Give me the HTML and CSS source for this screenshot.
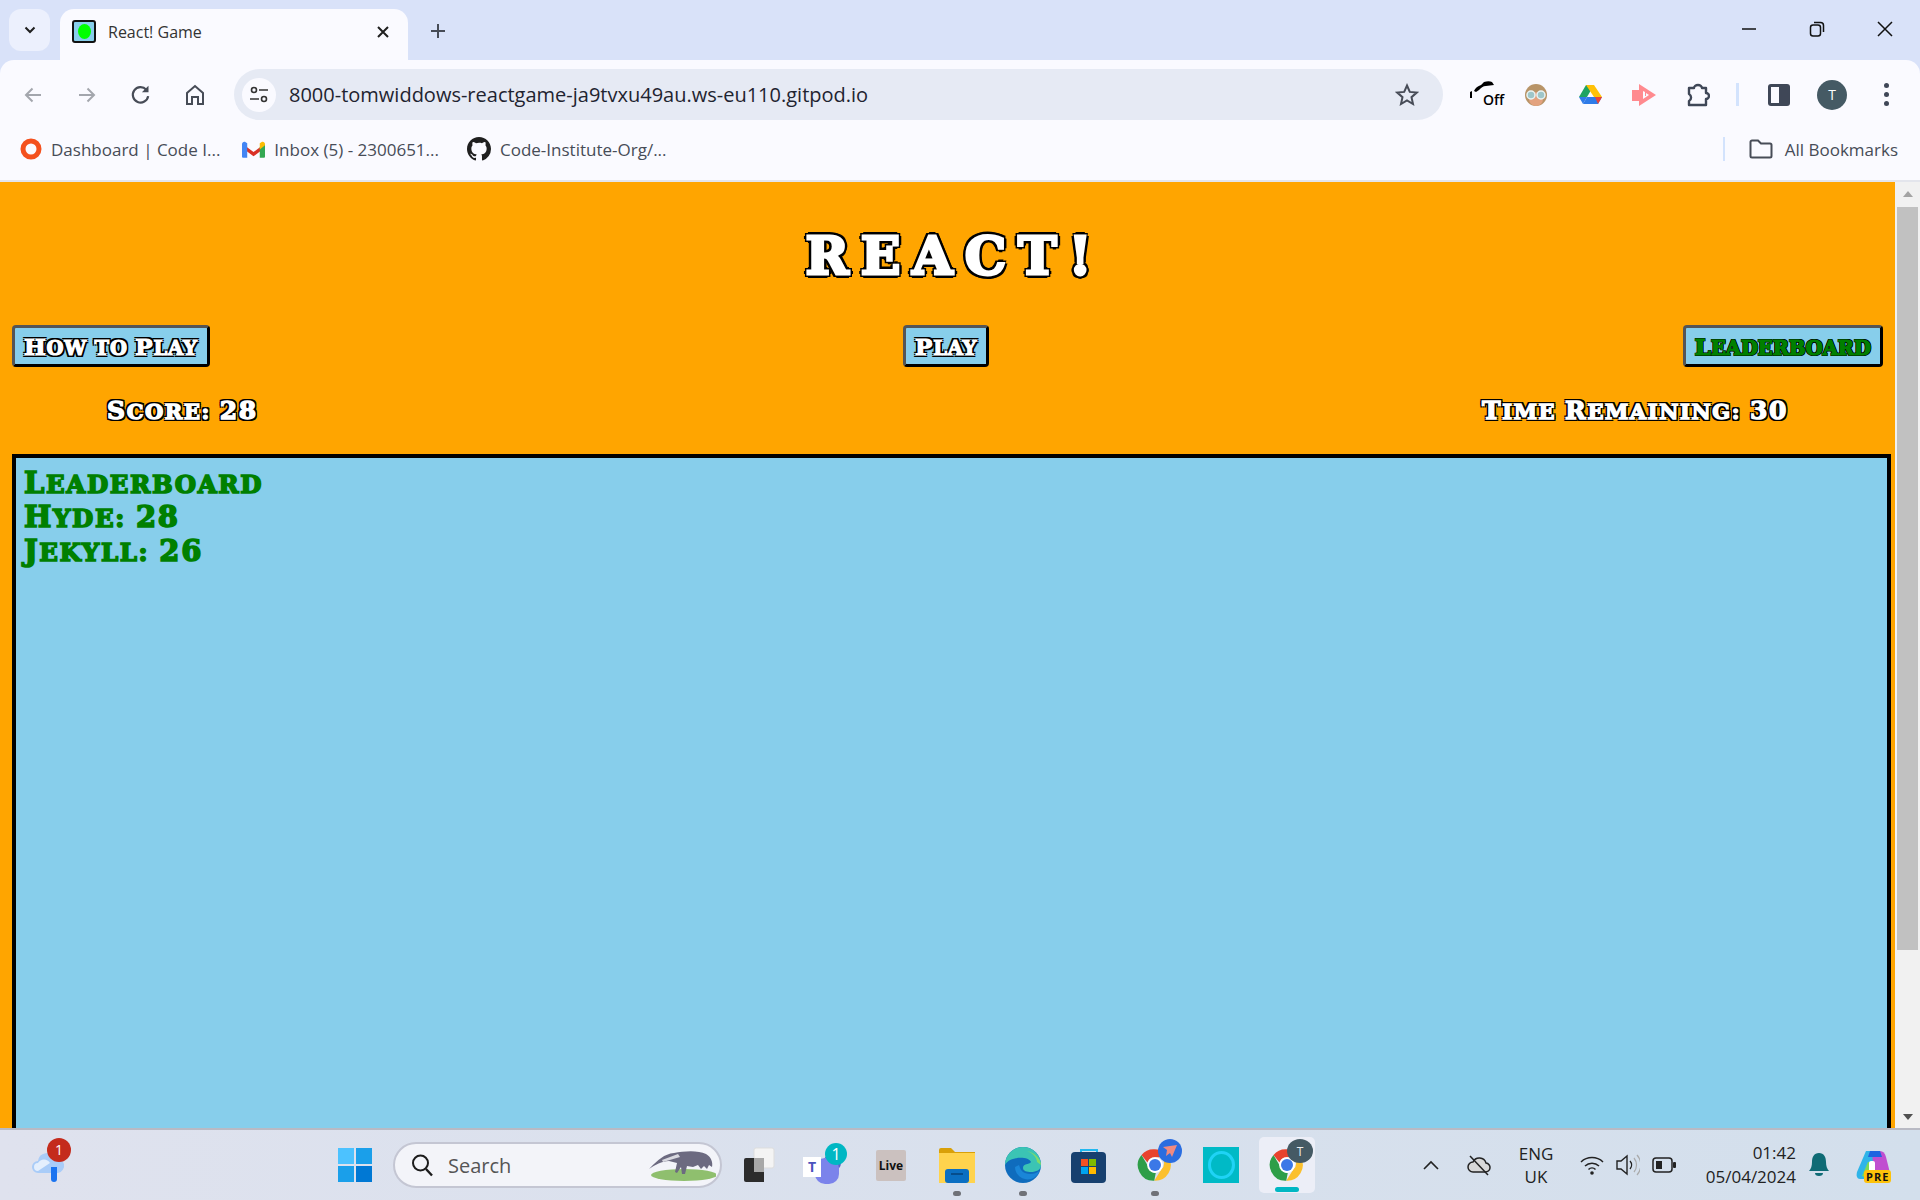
FILE: index.html
```html
<!DOCTYPE html>
<html lang="en">
<head>
    <meta charset="UTF-8">
    <title>React! Game</title>
    <link rel="stylesheet" href="styles.css">
</head>
<body>
    <svg class="defs" width="0" height="0">
        <symbol id="chrome-logo" viewBox="0 0 48 48">
            <path d="M24 3a21 21 0 0 1 18.2 10.5H24a10.500 10.500 0 0 0-10 7.300L6 10.500A21 21 0 0 1 24 3z" fill="#e8432e"/>
            <path d="M42.200 13.500A21 21 0 0 1 23 45l9.500-15.500a10.500 10.500 0 0 0 0-16z" fill="#fbc02d"/>
            <path d="M6 10.500l9 15.500a10.500 10.500 0 0 0 10 8.500l-2 10.500A21 21 0 0 1 6 10.500z" fill="#2e9e48"/>
            <circle cx="24" cy="24" r="10.500" fill="#fff"/>
            <circle cx="24" cy="24" r="8" fill="#3b78e7"/>
        </symbol>
    </svg>

    <div class="tab-strip">
        <div class="tab-list">
            <svg width="14" height="14" viewBox="0 0 14 14"><path d="M2.500 4.500L7 9l4.500-4.500" fill="none" stroke="#1f1f1f" stroke-width="2"/></svg>
        </div>
        <div class="tab">
            <span class="favicon"><span class="favicon-dot"></span></span>
            <span class="tab-title">React! Game</span>
            <svg class="tab-close" width="14" height="14" viewBox="0 0 14 14"><path d="M2 2l10 10M12 2L2 12" stroke="#1f1f1f" stroke-width="2"/></svg>
        </div>
        <svg class="new-tab" width="18" height="18" viewBox="0 0 18 18"><path d="M9 2v14M2 9h14" stroke="#474c57" stroke-width="2"/></svg>
        <div class="window-controls">
            <svg width="16" height="16" viewBox="0 0 16 16"><path d="M1 8h14" stroke="#111" stroke-width="1.500"/></svg>
            <svg width="16" height="16" viewBox="0 0 16 16"><rect x="1.500" y="4" width="10" height="11" rx="2.500" fill="none" stroke="#111" stroke-width="1.500"/><path d="M5 1.500h6.500a3 3 0 0 1 3 3V11" fill="none" stroke="#111" stroke-width="1.500"/></svg>
            <svg width="16" height="16" viewBox="0 0 16 16"><path d="M1 1l14 14M15 1L1 15" stroke="#111" stroke-width="1.500"/></svg>
        </div>
    </div>

    <div class="toolbar">
        <span class="tool-btn"><svg width="20" height="20" viewBox="0 0 20 20"><path d="M18 10H3M9.500 3.500L3 10l6.500 6.500" fill="none" stroke="#a3a6ad" stroke-width="2"/></svg></span>
        <span class="tool-btn"><svg width="20" height="20" viewBox="0 0 20 20"><path d="M2 10h15M10.500 3.500L17 10l-6.500 6.500" fill="none" stroke="#a3a6ad" stroke-width="2"/></svg></span>
        <span class="tool-btn"><svg width="22" height="22" viewBox="0 0 20 20"><path d="M16.500 11a7 7 0 1 1-1.700-5.800" fill="none" stroke="#474c57" stroke-width="2"/><path d="M16.800 1.500v6h-6z" fill="#474c57"/></svg></span>
        <span class="tool-btn"><svg width="20" height="22" viewBox="0 0 20 22"><path d="M2 20V9l8-7 8 7v11h-5v-7H7v7z" fill="none" stroke="#474c57" stroke-width="2"/></svg></span>
        <div class="omnibox">
            <span class="site-info">
                <svg width="20" height="20" viewBox="0 0 20 20"><circle cx="5" cy="5" r="2.500" fill="none" stroke="#333" stroke-width="1.600"/><path d="M10 5h9M1 14h9" stroke="#333" stroke-width="1.600"/><circle cx="15" cy="14" r="2.500" fill="none" stroke="#333" stroke-width="1.600"/></svg>
            </span>
            <span class="url">8000-tomwiddows-reactgame-ja9tvxu49au.ws-eu110.gitpod.io</span>
            <svg class="star" width="24" height="24" viewBox="0 0 24 24"><path d="M12 2.500l2.800 6.400 6.900.7-5.200 4.600 1.500 6.800-6-3.500-6 3.500 1.500-6.800-5.200-4.600 6.900-.7z" fill="none" stroke="#474c57" stroke-width="2"/></svg>
        </div>
        <span class="ext-btn ext-off">
            <svg width="26" height="20" viewBox="0 0 26 20"><path d="M5 11c1-3 4-5 7-6l3-3c3-1 6-1 8 0l2 3-8 1c-3 0-5 2-7 4l-3 2zM1 12l2-1v7H1z" fill="#000"/></svg>
            <span class="off-badge">Off</span>
        </span>
        <span class="ext-btn">
            <svg width="24" height="24" viewBox="0 0 24 24"><circle cx="12" cy="12" r="11" fill="#b89468"/><ellipse cx="12" cy="16" rx="7" ry="7" fill="#e3a27f"/><circle cx="7" cy="12" r="4" fill="#9ec6c9" stroke="#e8f4f4" stroke-width="1.500"/><circle cx="17" cy="12" r="4" fill="#9ec6c9" stroke="#e8f4f4" stroke-width="1.500"/></svg>
        </span>
        <span class="ext-btn">
            <svg width="24" height="22" viewBox="0 0 24 22"><path d="M8 1h8L9 13H1z" fill="#1ea362"/><path d="M8 1h8l8 12h-8z" fill="#ffc107"/><path d="M24 13l-4 7H5l4-7z" fill="#2f7be8"/><path d="M20 20l4-7h-7z" fill="#ea4335"/><path d="M9 13l-4 7-4-7z" fill="#2f7be8"/></svg>
        </span>
        <span class="ext-btn">
            <svg width="26" height="24" viewBox="0 0 26 24"><path d="M8 1l17 11L8 23v-5H1V7h7zM12 8v8l6-4-3-2v3l-1 0V9z" fill="#ff8a8f" fill-rule="evenodd"/></svg>
        </span>
        <span class="ext-btn">
            <svg width="24" height="24" viewBox="0 0 24 24"><path d="M3 5h5a4 3 0 0 1 8 0h4v5a3 3 0 0 1 0 6v6H3v-4a4 4 0 0 0 0-7z" fill="none" stroke="#3f4757" stroke-width="2.400" stroke-linejoin="round"/></svg>
        </span>
        <span class="tool-divider"></span>
        <span class="panel-icon"><span class="panel-icon-fill"></span></span>
        <span class="avatar">T</span>
        <span class="dots"><i></i><i></i><i></i></span>
    </div>

    <div class="bookmarks">
        <span class="bookmark">
            <svg width="22" height="22" viewBox="0 0 22 22"><circle cx="11" cy="11" r="8" fill="none" stroke="#f4511e" stroke-width="5"/></svg>
            Dashboard | Code I...
        </span>
        <span class="bookmark bookmark-inbox">
            <svg width="23" height="17" viewBox="0 0 22 16"><path d="M1 3l10 7.500L21 3v4l-10 7.500L1 7z" fill="#d93025"/><path d="M0 3c0-2 2-3 3.500-2L5 2v14H1a1 1 0 0 1-1-1z" fill="#4285f4"/><path d="M17 6l5-3v12a1 1 0 0 1-1 1h-4z" fill="#34a853"/><path d="M17 2l1.500-1C20 0 22 1 22 3v1l-5 4z" fill="#fbbc04"/></svg>
            Inbox (5) - 2300651...
        </span>
        <span class="bookmark">
            <svg width="24" height="24" viewBox="0 0 16 16"><path d="M8 0C3.580 0 0 3.580 0 8c0 3.540 2.290 6.530 5.470 7.590.4.070.55-.17.55-.38v-1.340c-2.230.48-2.700-1.070-2.700-1.070-.36-.93-.89-1.170-.89-1.170-.73-.5.050-.49.050-.49.800.060 1.220.820 1.220.820.720 1.220 1.870.870 2.330.660.070-.520.280-.870.510-1.070-1.780-.200-3.640-.890-3.640-3.950 0-.870.310-1.590.820-2.150-.080-.200-.360-1.020.080-2.120 0 0 .670-.210 2.200.820A7.660 7.660 0 0 1 8 3.870c.680 0 1.360.090 2 .270 1.530-1.040 2.200-.820 2.200-.820.440 1.100.160 1.920.080 2.120.510.560.820 1.270.820 2.150 0 3.070-1.870 3.750-3.650 3.950.290.250.540.730.540 1.480v2.190c0 .210.150.460.550.380A8.010 8.010 0 0 0 16 8c0-4.420-3.580-8-8-8z" fill="#1f1f1f"/></svg>
            Code-Institute-Org/...
        </span>
        <span class="bookmark-divider"></span>
        <span class="bookmark all-bookmarks">
            <svg width="24" height="20" viewBox="0 0 24 20"><path d="M1.500 3a1.500 1.500 0 0 1 1.500-1.500h6l3 3h9A1.500 1.500 0 0 1 22.500 6v11A1.500 1.500 0 0 1 21 18.500H3A1.500 1.500 0 0 1 1.500 17z" fill="none" stroke="#474c57" stroke-width="2"/></svg>
            All Bookmarks
        </span>
    </div>

    <div class="viewport">
        <main class="game">
            <h1 class="game-title">React!</h1>
            <div class="game-buttons">
                <button class="game-btn" type="button"><span class="cap">H</span>ow to <span class="cap">P</span>lay</button>
                <button class="game-btn" type="button"><span class="cap">P</span>lay</button>
                <button class="game-btn game-btn-active" type="button"><span class="cap">L</span>eaderboard</button>
            </div>
            <div class="game-stats">
                <span class="stat"><span class="cap">S</span>core: <span class="cap">28</span></span>
                <span class="stat"><span class="cap">T</span>ime <span class="cap">R</span>emaining: <span class="cap">30</span></span>
            </div>
            <section class="game-area">
                <p><span class="cap">L</span>eaderboard</p>
                <p><span class="cap">H</span>yde: <span class="cap">28</span></p>
                <p><span class="cap">J</span>ekyll: <span class="cap">26</span></p>
            </section>
        </main>
        <div class="scrollbar">
            <span class="scroll-arrow-up"></span>
            <span class="scroll-thumb"></span>
            <span class="scroll-arrow-down"></span>
        </div>
    </div>

    <footer class="taskbar">
        <span class="weather">
            <svg width="36" height="40" viewBox="0 0 36 40"><path d="M8 28a6 6 0 0 1 0-12 9 9 0 0 1 17-3 7.500 7.500 0 0 1 3 15z" fill="#a9ccf8"/><path d="M8 26a4 4 0 0 1 0-8 7 7 0 0 1 12 0z" fill="#e4effd"/><path d="M21 22h6v12a3 3 0 0 1-6 0z" fill="#1a73f0"/></svg>
            <span class="weather-badge">1</span>
        </span>
        <div class="task-center">
            <span class="task-slot">
                <svg width="36" height="36" viewBox="0 0 36 36"><path d="M1 1h16v16H1z" fill="#4cc2ff"/><path d="M19 1h16v16H19z" fill="#1a9fea"/><path d="M1 19h16v16H1z" fill="#1a9fea"/><path d="M19 19h16v16H19z" fill="#0078d4"/></svg>
            </span>
            <div class="search">
                <svg width="24" height="24" viewBox="0 0 24 24"><circle cx="10.500" cy="10" r="7.500" fill="none" stroke="#1c1c1c" stroke-width="2"/><path d="M16 16l6 6.500" stroke="#1c1c1c" stroke-width="2.400"/></svg>
                <span class="search-label">Search</span>
                <svg class="anteater" width="68" height="34" viewBox="0 0 68 34"><ellipse cx="36" cy="27" rx="33" ry="6" fill="#8fbf6e"/><path d="M2 20c8-8 14-14 24-15 10-2 24-3 32 1 5 3 7 8 6 13l-3-2-2 4-3-3-3 3-3-4-5 2-6-1-2 8h-3l-1-7-4 6-2-1 2-9-8-2c-7 0-14 4-20 8z" fill="#6c6a80"/><path d="M14 12l16-6 2 3-17 5z" fill="#d9d9e0"/></svg>
            </div>
            <span class="task-slot first-app">
                <svg width="34" height="36" viewBox="0 0 34 36"><rect x="12" y="1" width="20" height="20" rx="2" fill="#f4f4f4" stroke="#ddd"/><path d="M2 13a2 2 0 0 1 2-2h18v24H4a2 2 0 0 1-2-2z" fill="#2c2c2c"/><rect x="12" y="11" width="10" height="14" fill="#a8a8a8"/></svg>
            </span>
            <span class="task-slot">
                <svg width="44" height="44" viewBox="0 0 44 44"><circle cx="29" cy="20" r="9" fill="#5b5fc7"/><rect x="12" y="15" width="24" height="26" rx="10" fill="#7b83eb"/><rect x="0" y="14" width="18" height="20" fill="#fff"/><text x="9" y="29" class="teams-t">T</text><circle cx="33" cy="11" r="11" fill="#00b7c3"/><text x="33" y="17" class="teams-n">1</text></svg>
            </span>
            <span class="task-slot"><span class="live-icon">Live</span></span>
            <span class="task-slot dot-under">
                <svg width="36" height="36" viewBox="0 0 36 36"><path d="M0 3a2 2 0 0 1 2-2h10l4 4h20v6H0z" fill="#d9a008"/><path d="M0 6h36v30H0z" fill="#ffd34d"/><rect x="6" y="22" width="24" height="14" rx="3" fill="#0b6fc2"/><path d="M12 27h12" stroke="#064d8c" stroke-width="2"/></svg>
            </span>
            <span class="task-slot dot-under">
                <svg width="36" height="36" viewBox="0 0 36 36"><circle cx="18" cy="18" r="18" fill="#0f6cbd"/><path d="M0 18A18 18 0 0 1 36 18c0 5-5 7-10 7-4 0-8-1-8-4 0-5 6-3 8-6C24 9 4 9 0 18z" fill="#3bc4b4"/><path d="M36 18c0-5-5-12-14-14 6 2 10 7 10 11z" fill="#7fdc6a"/><path d="M10 20c0 8 8 14 16 12 6-2 8-6 8-8-3 3-9 4-14 2-3-1-5-4-6-8z" fill="#1a86d8"/></svg>
            </span>
            <span class="task-slot">
                <svg width="36" height="36" viewBox="0 0 36 36"><path d="M10 7V3h16v4" fill="none" stroke="#22b8f0" stroke-width="2"/><rect x="0" y="5" width="35" height="31" rx="4" fill="#17406f"/><rect x="10" y="12" width="7" height="7" fill="#f25022"/><rect x="18" y="12" width="7" height="7" fill="#7fba00"/><rect x="10" y="20" width="7" height="7" fill="#00a4ef"/><rect x="18" y="20" width="7" height="7" fill="#ffb900"/></svg>
            </span>
            <span class="task-slot dot-under badged">
                <svg width="36" height="36"><use href="#chrome-logo"/></svg>
                <span class="chrome-badge chrome-badge-blue">
                    <svg width="16" height="16" viewBox="0 0 16 16"><path d="M15 2L10 14 8 10l-4 3 1-6-4-3z" fill="#f08a80"/></svg>
                </span>
            </span>
            <span class="task-slot">
                <span class="alexa-icon"><span class="alexa-ring"></span></span>
            </span>
            <span class="task-slot task-active badged">
                <svg width="36" height="36"><use href="#chrome-logo"/></svg>
                <span class="chrome-badge">T</span>
                <span class="active-bar"></span>
            </span>
        </div>
        <div class="tray">
            <svg class="tray-chevron" width="18" height="18" viewBox="0 0 18 18"><path d="M2 13l7-7 7 7" fill="none" stroke="#222" stroke-width="1.600"/></svg>
            <svg class="tray-cloud" width="24" height="22" viewBox="0 0 24 22"><path d="M6 18a5 5 0 0 1 0-10 7 7 0 0 1 13 1 4.500 4.500 0 0 1-1 9z" fill="#d8d8d8" stroke="#222" stroke-width="1.500"/><path d="M3 2l18 19" stroke="#222" stroke-width="1.500"/></svg>
            <span class="tray-lang">ENG<br>UK</span>
            <svg class="tray-wifi" width="24" height="20" viewBox="0 0 24 20"><path d="M1 7a16 16 0 0 1 22 0M5 11a10 10 0 0 1 14 0M8.500 14.500a5 5 0 0 1 7 0" fill="none" stroke="#222" stroke-width="1.500"/><circle cx="12" cy="18" r="1.800" fill="#222"/></svg>
            <svg class="tray-sound" width="24" height="22" viewBox="0 0 24 22"><path d="M1 7h4l6-5v18l-6-5H1z" fill="none" stroke="#222" stroke-width="1.400"/><path d="M14 7a6 6 0 0 1 0 8" fill="none" stroke="#222" stroke-width="1.400"/><path d="M18 4a11 11 0 0 1 0 14M21 1a15 15 0 0 1 0 20" fill="none" stroke="#aaa" stroke-width="1.200"/></svg>
            <svg class="tray-battery" width="24" height="16" viewBox="0 0 24 16"><rect x="1" y="1" width="19" height="14" rx="3" fill="none" stroke="#222" stroke-width="1.500"/><rect x="4" y="4" width="6" height="8" fill="#222"/><rect x="21" y="5" width="3" height="6" rx="1" fill="#222"/></svg>
            <span class="tray-clock">01:42<br>05/04/2024</span>
            <svg class="tray-bell" width="20" height="24" viewBox="0 0 20 24"><path d="M10 0c5 0 7 4 7 9 0 4 1 7 3 9H0c2-2 3-5 3-9 0-5 2-9 7-9z" fill="#0f6b75"/><path d="M6 20h8a4 3 0 0 1-8 0z" fill="#0f6b75"/></svg>
            <span class="copilot">
                <svg width="34" height="30" viewBox="0 0 34 30"><path d="M10 1h14l-8 28H4C1 29 0 26 1 22z" fill="#2fb4e8"/><path d="M6 26l6-14h6l-4 17z" fill="#7ed957"/><path d="M16 1h8c3 0 5 2 6 6l3 12c1 4-1 7-4 7H18z" fill="#c04fd0"/><path d="M14 1h10l2 6H12z" fill="#1e64e0"/><rect x="13" y="11" width="6" height="12" rx="2" fill="#fff"/></svg>
                <span class="pre-badge">PRE</span>
            </span>
        </div>
    </footer>
</body>
</html>
```

FILE: styles.css
```css
* {
    box-sizing: border-box;
}
html, body {
    margin: 0;
    height: 1200px;
    overflow: hidden;
}
body {
    display: flex;
    flex-direction: column;
    font-family: "Open Sans", "Noto Sans", sans-serif;
    background-color: #d9e2f9;
}
svg {
    display: block;
    flex-shrink: 0;
}
.defs {
    position: absolute;
}

/* browser tabs */
.tab-strip {
    height: 60px;
    display: flex;
    align-items: flex-start;
    padding-left: 9px;
    background-color: #d9e2f9;
}
.tab-list {
    width: 41px;
    height: 42px;
    margin-top: 9px;
    display: flex;
    align-items: center;
    justify-content: center;
    background-color: #ecf0fd;
    border-radius: 12px;
}
.tab {
    width: 348px;
    height: 51px;
    margin: 9px 0 0 10px;
    padding: 0 18px 6px 12px;
    display: flex;
    align-items: center;
    background-color: #fafaff;
    border-radius: 14px 14px 0 0;
}
.favicon {
    width: 24px;
    height: 23px;
    display: flex;
    align-items: center;
    justify-content: center;
    background-color: #87ceeb;
    border: 2px solid #111;
    border-radius: 3px;
}
.favicon-dot {
    width: 13px;
    height: 15px;
    background-color: #00ff00;
    border-radius: 50%;
}
.tab-title {
    margin-left: 12px;
    font-size: 16px;
    color: #333;
}
.tab-close {
    margin-left: auto;
}
.new-tab {
    margin: 22px 0 0 21px;
}
.window-controls {
    margin-left: auto;
    padding: 21px 27px 0 0;
    display: flex;
    gap: 52px;
}

/* toolbar */
.toolbar {
    height: 60px;
    display: flex;
    align-items: center;
    padding: 9px 0 0 6px;
    background-color: #fafaff;
    border-radius: 14px 14px 0 0;
}
.tool-btn {
    width: 54px;
    display: flex;
    justify-content: center;
}
.omnibox {
    width: 1209px;
    height: 51px;
    margin-left: 12px;
    padding: 0 24px 0 8px;
    display: flex;
    align-items: center;
    background-color: #e6eaf4;
    border-radius: 26px;
}
.site-info {
    width: 34px;
    height: 34px;
    display: flex;
    align-items: center;
    justify-content: center;
    background-color: #fafaff;
    border-radius: 50%;
}
.url {
    margin-left: 13px;
    font-size: 20px;
    color: #1f2430;
}
.star {
    margin-left: auto;
}
.ext-btn {
    width: 54px;
    display: flex;
    justify-content: center;
}
.ext-off {
    position: relative;
    margin-left: 12px;
    height: 30px;
}
.off-badge {
    position: absolute;
    top: 10px;
    left: 27px;
    padding: 0 1px;
    font-size: 14px;
    font-weight: 600;
    line-height: 20px;
    color: #000;
    background-color: #fafaff;
    border-radius: 3px;
}
.tool-divider {
    width: 3px;
    height: 23px;
    margin-left: 11px;
    background-color: #d3e3fd;
}
.panel-icon {
    width: 22px;
    height: 22px;
    margin-left: 29px;
    padding: 3px 11px 3px 3px;
    background-color: #3f4757;
    border-radius: 3px;
}
.panel-icon-fill {
    display: block;
    width: 100%;
    height: 100%;
    background-color: #fafaff;
}
.avatar {
    width: 30px;
    height: 30px;
    margin-left: 27px;
    display: flex;
    align-items: center;
    justify-content: center;
    font-size: 14px;
    color: #fff;
    background-color: #455a64;
    border-radius: 50%;
}
.dots {
    margin-left: 37px;
    display: flex;
    flex-direction: column;
    gap: 4px;
}
.dots i {
    width: 5px;
    height: 5px;
    background-color: #3f4757;
    border-radius: 50%;
}

/* bookmarks */
.bookmarks {
    height: 62px;
    padding: 0 22px 2px 20px;
    display: flex;
    align-items: center;
    font-size: 17px;
    color: #474c57;
    background-color: #fafaff;
    border-bottom: 2px solid #e3e5ec;
}
.bookmark {
    display: flex;
    align-items: center;
    gap: 9px;
    margin-right: 22px;
    white-space: nowrap;
}
.bookmark-inbox {
    margin-right: 28px;
}
.bookmark-divider {
    width: 2px;
    height: 24px;
    margin-left: auto;
    margin-right: 24px;
    background-color: #d3e3fd;
}
.all-bookmarks {
    gap: 12px;
    margin-right: 0;
}

/* game page */
.viewport {
    height: 946px;
    display: flex;
    overflow: hidden;
}
.game {
    width: 1895px;
    height: 946px;
    background-color: orange;
    font-family: "DejaVu Serif", "Liberation Serif", serif;
    font-weight: 700;
    overflow: hidden;
}
.game-title {
    margin: 0;
    height: 143px;
    padding: 39px 0 0 14px;
    text-align: center;
    font-size: 52px;
    line-height: 70px;
    text-transform: uppercase;
    letter-spacing: 12px;
    color: #fff;
    -webkit-text-stroke: 3px #fff;
    text-shadow: 4px 0 #000, -4px 0 #000, 0 4px #000, 0 -4px #000, 3px 3px #000, -3px 3px #000, 3px -3px #000, -3px -3px #000;
}
.game-buttons {
    height: 42px;
    padding: 0 12px;
    display: flex;
    justify-content: space-between;
}
.game-btn {
    height: 42px;
    padding: 0 9px;
    font-family: inherit;
    font-weight: inherit;
    font-size: 19.5px;
    text-transform: uppercase;
    letter-spacing: .8px;
    color: #fff;
    -webkit-text-stroke: 1.2px #fff;
    text-shadow: 2px 0 #000, -2px 0 #000, 0 2px #000, 0 -2px #000, 2px 2px #000, -2px 2px #000, 2px -2px #000, -2px -2px #000;
    background-color: #87ceeb;
    border: 3px solid;
    border-color: #555 #000 #000 #555;
    border-radius: 4px;
}
.game-btn .cap {
    font-size: 23px;
}
.game-btn-active {
    letter-spacing: 0;
    color: green;
    -webkit-text-stroke-color: green;
    text-shadow: 1px 0 #000, -1px 0 #000, 0 1px #000, 0 -1px #000, 1px 1px #000, -1px 1px #000, 1px -1px #000, -1px -1px #000;
}
.game-stats {
    height: 87px;
    padding: 0 107px 0;
    display: flex;
    align-items: center;
    justify-content: space-between;
    font-size: 21px;
    text-transform: uppercase;
    letter-spacing: 1.6px;
    color: #fff;
    -webkit-text-stroke: 1.4px #fff;
    text-shadow: 2px 0 #000, -2px 0 #000, 0 2px #000, 0 -2px #000, 2px 2px #000, -2px 2px #000, 2px -2px #000, -2px -2px #000;
}
.game-stats .cap {
    font-size: 25px;
}
.game-area {
    height: 1000px;
    margin: 0 4px 0 12px;
    padding: 10px 8px;
    font-size: 24.5px;
    line-height: 34px;
    text-transform: uppercase;
    letter-spacing: 1.6px;
    color: green;
    -webkit-text-stroke: 1.6px green;
    background-color: #87ceeb;
    border: 4px solid #000;
}
.game-area .cap {
    font-size: 29px;
    line-height: 0;
}
.game-area p {
    margin: 0;
}

/* scrollbar */
.scrollbar {
    width: 25px;
    padding: 0 2px 0 2px;
    display: flex;
    flex-direction: column;
    align-items: center;
    background-color: #f1f1f1;
}
.scroll-arrow-up {
    margin: 9px 0 10px;
    border: 5px solid transparent;
    border-top: 0;
    border-bottom: 6px solid #a3a3a3;
    border-left-width: 5px;
}
.scroll-thumb {
    width: 21px;
    height: 743px;
    background-color: #c1c1c1;
}
.scroll-arrow-down {
    margin-top: auto;
    margin-bottom: 8px;
    border: 5px solid transparent;
    border-bottom: 0;
    border-top: 6px solid #505050;
}

/* windows taskbar */
.taskbar {
    position: relative;
    height: 72px;
    display: flex;
    align-items: center;
    background: linear-gradient(90deg, #dfe2ee, #d3dfec);
    border-top: 2px solid #b9bac4;
}
.weather {
    position: relative;
    width: 36px;
    margin-left: 30px;
}
.weather-badge {
    position: absolute;
    top: -7px;
    left: 17px;
    width: 24px;
    height: 24px;
    font-size: 14px;
    line-height: 24px;
    text-align: center;
    color: #fff;
    background-color: #c42b1c;
    border-radius: 50%;
}
.task-center {
    margin-left: 256px;
    display: flex;
    align-items: center;
}
.task-slot {
    position: relative;
    width: 66px;
    height: 56px;
    display: flex;
    align-items: center;
    justify-content: center;
}
.first-app {
    margin-left: 4px;
}
.dot-under::after {
    content: "";
    position: absolute;
    bottom: -3px;
    left: 29px;
    width: 8px;
    height: 5px;
    background-color: #6f7177;
    border-radius: 3px;
}
.search {
    width: 329px;
    height: 46px;
    margin-left: 5px;
    padding: 0 4px 0 15px;
    display: flex;
    align-items: center;
    background-color: #f3f4f9;
    border: 2px solid #c4c6d3;
    border-radius: 23px;
}
.search-label {
    margin-left: 14px;
    font-size: 20px;
    color: #555;
}
.anteater {
    margin-left: auto;
}
.teams-t {
    font-family: "Open Sans", sans-serif;
    font-size: 14px;
    font-weight: 700;
    text-anchor: middle;
    fill: #4b53bc;
}
.teams-n {
    font-family: "Open Sans", sans-serif;
    font-size: 16px;
    text-anchor: middle;
    fill: #fff;
}
.live-icon {
    width: 30px;
    height: 31px;
    display: flex;
    align-items: center;
    justify-content: center;
    font-family: "Open Sans", sans-serif;
    font-size: 12px;
    font-weight: 700;
    color: #111;
    background-color: #cbc1bf;
    border-radius: 2px;
}
.chrome-badge {
    position: absolute;
    top: 2px;
    left: 36px;
    width: 24px;
    height: 24px;
    display: flex;
    align-items: center;
    justify-content: center;
    font-family: "Open Sans", sans-serif;
    font-size: 12px;
    color: #eee;
    background-color: #455a64;
    border-radius: 50%;
}
.chrome-badge-blue {
    background-color: #2a6de0;
}
.alexa-icon {
    width: 36px;
    height: 36px;
    display: flex;
    align-items: center;
    justify-content: center;
    background-color: #00bac6;
}
.alexa-ring {
    width: 27px;
    height: 28px;
    border: 3px solid #1fd3f5;
    border-radius: 50%;
}
.task-active {
    width: 56px;
    margin: 0 5px;
    background-color: #eceef7;
    border-radius: 5px;
}
.task-active .chrome-badge {
    left: 28px;
    width: 26px;
}
.active-bar {
    position: absolute;
    bottom: 1px;
    left: 16px;
    width: 24px;
    height: 5px;
    background-color: #00b7c3;
    border-radius: 3px;
}
.tray {
    margin-left: auto;
    display: flex;
    align-items: center;
}
.tray-chevron {
    margin-right: 27px;
}
.tray-cloud {
    margin-right: 25px;
}
.tray-lang {
    width: 40px;
    margin-right: 24px;
    text-align: center;
    font-size: 17px;
    line-height: 23px;
    color: #222;
}
.tray-wifi {
    margin-right: 12px;
}
.tray-sound {
    margin-right: 12px;
}
.tray-battery {
    margin-right: 20px;
}
.tray-clock {
    width: 100px;
    text-align: right;
    font-size: 17px;
    line-height: 24px;
    color: #222;
}
.tray-bell {
    margin: 0 27px 0 13px;
}
.copilot {
    position: relative;
    margin-right: 30px;
}
.pre-badge {
    position: absolute;
    top: 20px;
    left: 8px;
    padding: 0 2px;
    font-size: 11px;
    font-weight: 700;
    line-height: 13px;
    letter-spacing: 1px;
    color: #111;
    background-color: #fdc20a;
    border-radius: 3px;
}
```
